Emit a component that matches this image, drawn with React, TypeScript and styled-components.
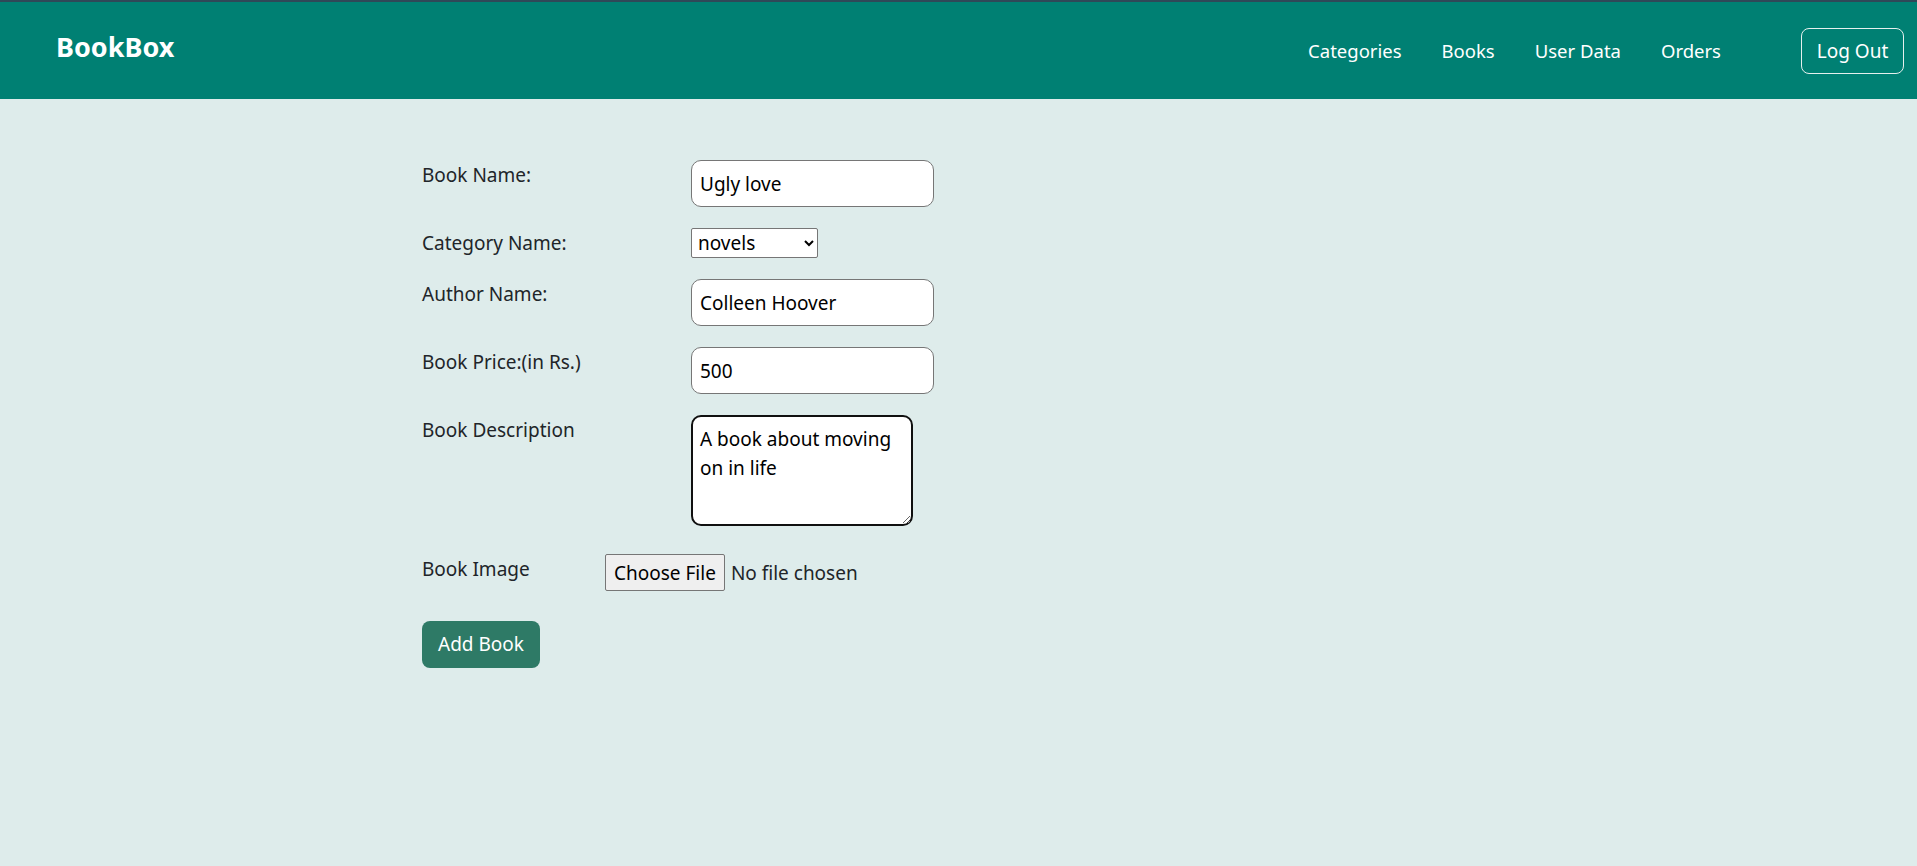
import React from 'react';
import styled, { createGlobalStyle } from 'styled-components';

const GlobalStyle = createGlobalStyle`
  html, body { margin: 0; padding: 0; background: #deeceb; }
  body { font-family: "Noto Sans", "Open Sans", sans-serif; color: #212529; }
  * { box-sizing: border-box; }
`;

const Page = styled.div`
  min-height: 866px;
  background: #deeceb;
`;

const Header = styled.header`
  height: 99px;
  border-top: 2px solid #2f4858;
  background: #008073;
  display: flex;
  align-items: center;
  padding: 0 13px 0 56px;
`;

const Brand = styled.a`
  font-size: 27px;
  font-weight: 700;
  color: #ffffff;
  text-decoration: none;
  margin-bottom: 9px;
`;

const Nav = styled.nav`
  margin-left: auto;
  display: flex;
  align-items: center;
`;

const NavList = styled.ul`
  list-style: none;
  margin: 0 80px 0 0;
  padding: 0;
  display: flex;
  gap: 40px;
`;

const NavLink = styled.a`
  font-size: 18.5px;
  color: #ffffff;
  text-decoration: none;
`;

const LogOut = styled.button`
  height: 46px;
  width: 103px;
  border: 1px solid #e6f0ee;
  border-radius: 8px;
  background: transparent;
  color: #ffffff;
  font-family: inherit;
  font-size: 19px;
  padding: 0;
`;

const Form = styled.form`
  padding: 61px 0 0 422px;
  display: flex;
  flex-direction: column;
  gap: 21px;
`;

const Row = styled.div<{ $labelWidth?: number; $top?: number }>`
  display: flex;
  align-items: flex-start;
  margin-top: ${(p) => p.$top ?? 0}px;
  & > label {
    width: ${(p) => p.$labelWidth ?? 269}px;
  }
`;

const Label = styled.label`
  flex: none;
  font-size: 19px;
  line-height: 30px;
  color: #212529;
`;

const TextInput = styled.input`
  width: 243px;
  height: 47px;
  border: 1px solid #767676;
  border-radius: 10px;
  background: #ffffff;
  padding: 0 8px;
  font-family: inherit;
  font-size: 19px;
  color: #000000;
  outline: none;
`;

const Select = styled.select`
  width: 127px;
  height: 30px;
  border: 1px solid #767676;
  border-radius: 2px;
  background: #ffffff;
  padding: 0 2px;
  font-family: inherit;
  font-size: 19px;
  color: #000000;
`;

const TextArea = styled.textarea`
  width: 222px;
  height: 111px;
  border: 2px solid #101010;
  border-radius: 10px;
  background: #ffffff;
  padding: 8px 7px 6px;
  font-family: inherit;
  font-size: 19px;
  line-height: 29px;
  color: #000000;
  outline: none;
`;

const FileInput = styled.input`
  font-family: inherit;
  font-size: 19px;
  color: #212529;
  line-height: 37px;
  &::file-selector-button {
    height: 37px;
    padding: 0 8px;
    margin-right: 6px;
    border: 1px solid #767676;
    border-radius: 2px;
    background: #efefef;
    color: #000000;
    font-family: inherit;
    font-size: 19px;
  }
`;

const Submit = styled.button`
  align-self: flex-start;
  margin-top: 8px;
  height: 47px;
  padding: 0 16px;
  border: none;
  border-radius: 8px;
  background: #2e7a66;
  color: #ffffff;
  font-family: inherit;
  font-size: 19px;
`;

export default function App() {
  return (
    <Page>
      <GlobalStyle />
      <Header>
        <Brand href="#">BookBox</Brand>
        <Nav>
          <NavList>
            <li><NavLink href="#">Categories</NavLink></li>
            <li><NavLink href="#">Books</NavLink></li>
            <li><NavLink href="#">User Data</NavLink></li>
            <li><NavLink href="#">Orders</NavLink></li>
          </NavList>
          <LogOut type="button">Log Out</LogOut>
        </Nav>
      </Header>
      <Form onSubmit={(e) => e.preventDefault()}>
        <Row>
          <Label>Book Name:</Label>
          <TextInput type="text" defaultValue="Ugly love" />
        </Row>
        <Row>
          <Label>Category Name:</Label>
          <Select defaultValue="novels">
            <option value="novels">novels</option>
            <option value="fiction">fiction</option>
            <option value="poetry">poetry</option>
          </Select>
        </Row>
        <Row>
          <Label>Author Name:</Label>
          <TextInput type="text" defaultValue="Colleen Hoover" />
        </Row>
        <Row>
          <Label>Book Price:(in Rs.)</Label>
          <TextInput type="text" defaultValue="500" />
        </Row>
        <Row>
          <Label>Book Description</Label>
          <TextArea defaultValue="A book about moving on in life" />
        </Row>
        <Row $labelWidth={183} $top={7}>
          <Label>Book Image</Label>
          <FileInput type="file" />
        </Row>
        <Submit type="submit">Add Book</Submit>
      </Form>
    </Page>
  );
}
